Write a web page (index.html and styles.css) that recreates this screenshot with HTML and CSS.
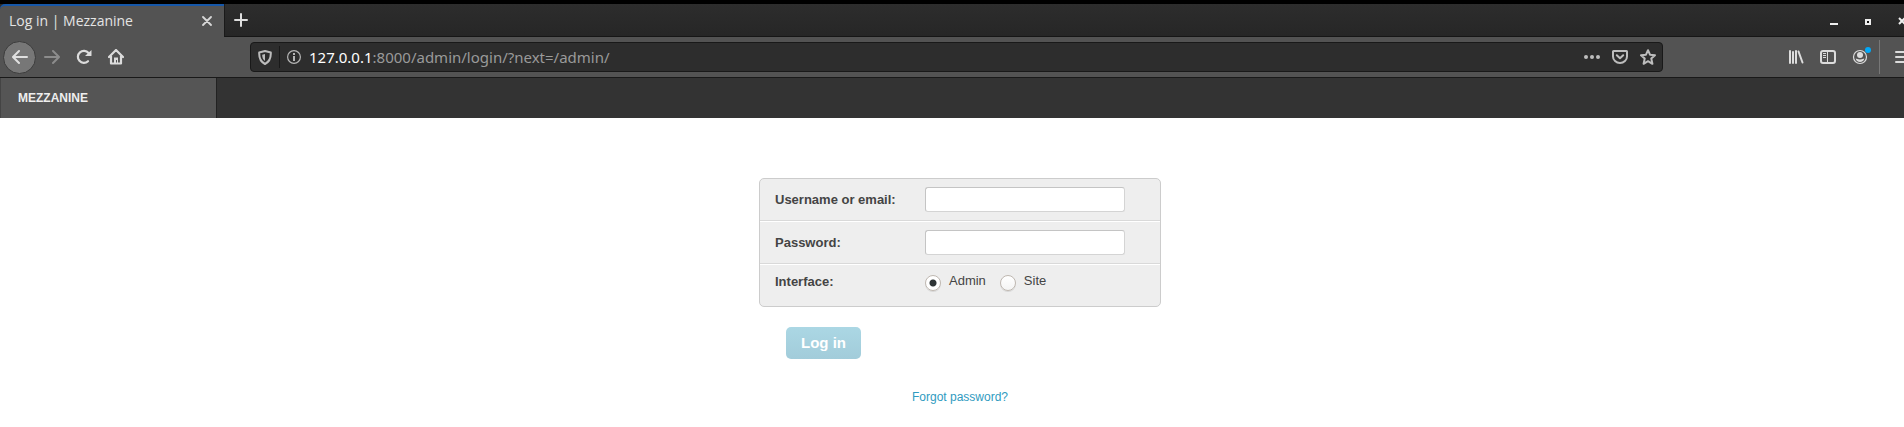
FILE: index.html
```html
<!DOCTYPE html>
<html lang="en">
<head>
<meta charset="utf-8">
<title>Log in | Mezzanine</title>
<link rel="stylesheet" href="styles.css">
</head>
<body>
<div class="window">
  <header class="tabs">
    <div class="tab">
      <span class="tab-title">Log in | Mezzanine</span>
      <button class="plain tab-close" aria-label="Close tab"><svg width="10" height="10" viewBox="0 0 10 10"><path d="M1 1l8 8M9 1l-8 8" fill="none" stroke="#d8d8d8" stroke-width="1.8" stroke-linecap="round"/></svg></button>
    </div>
    <button class="plain new-tab" aria-label="New tab"><svg width="14" height="14" viewBox="0 0 14 14"><path d="M7 1v12M1 7h12" fill="none" stroke="#dedede" stroke-width="2" stroke-linecap="round"/></svg></button>
    <div class="controls">
      <button class="plain control" aria-label="Minimize"><svg width="8" height="8" viewBox="0 0 8 8"><path d="M0 6h8v2H0z" fill="#eee"/></svg></button>
      <button class="plain control" aria-label="Maximize"><svg width="8" height="8" viewBox="0 0 8 8"><path d="M2 3h4v4H2z" fill="#111" stroke="#eee" stroke-width="2"/></svg></button>
      <button class="plain control" aria-label="Close"><svg width="8" height="8" viewBox="0 0 8 8"><path d="M1 1l6 6M7 1L1 7" stroke="#eee" stroke-width="2"/></svg></button>
    </div>
  </header>

  <nav class="toolbar" aria-label="Navigation">
    <button class="plain tool back" aria-label="Back"><svg width="16" height="16" viewBox="0 0 16 16"><path d="M15 8H1.500M7 2L1 8l6 6" fill="none" stroke="#e0e0e0" stroke-width="2" stroke-linecap="round" stroke-linejoin="round"/></svg></button>
    <button class="plain tool" aria-label="Forward"><svg width="16" height="16" viewBox="0 0 16 16"><path d="M1 8h13.500M9 2l6 6-6 6" fill="none" stroke="#8c8c8c" stroke-width="2" stroke-linecap="round" stroke-linejoin="round"/></svg></button>
    <button class="plain tool" aria-label="Reload"><svg width="16" height="16" viewBox="0 0 16 16"><path d="M12 12.200A6 6 0 1 1 12.500 4" fill="none" stroke="#dcdcdc" stroke-width="2.200" stroke-linecap="round"/><path d="M15.500 1v5.500a.5.500 0 0 1-.5.500H9z" fill="#dcdcdc"/></svg></button>
    <button class="plain tool" aria-label="Home"><svg width="16" height="16" viewBox="0 0 16 16"><path d="M1 8l7-7 7 7M3 7v7.500h10V7" fill="none" stroke="#dcdcdc" stroke-width="2.200" stroke-linecap="round" stroke-linejoin="round"/><path d="M6 8.500h4V14H9v-3H8v3H6z" fill="#dcdcdc"/></svg></button>

    <div class="address">
      <span class="shield"><svg width="14" height="15" viewBox="0 0 14 15"><path d="M7 1l5.800 1.500c.2 5-.8 9-5.800 11.500C2 11.500 1 7.500 1.200 2.500z" fill="none" stroke="#bdbdbd" stroke-width="2" stroke-linejoin="round"/><path d="M7 4v7C4.900 9.600 4.200 7.500 4.200 4.700z" fill="#bdbdbd"/></svg></span>
      <span class="info"><svg width="14" height="14" viewBox="0 0 14 14"><circle cx="7" cy="7" r="6.400" fill="none" stroke="#b5b5b5" stroke-width="1.200"/><path d="M6 6h2v5H6zM6 3h2v2H6z" fill="#b5b5b5"/></svg></span>
      <span class="url"><b>127.0.0.1</b>:8000/admin/login/?next=/admin/</span>
      <span class="page-actions">
        <svg width="16" height="16" viewBox="0 0 16 16"><g fill="#bdbdbd"><circle cx="2" cy="8" r="2"/><circle cx="8" cy="8" r="2"/><circle cx="14" cy="8" r="2"/></g></svg>
        <svg width="16" height="16" viewBox="0 0 16 16"><path d="M1.500 2h13a.5.500 0 0 1 .5.500V7.500a7 6.500 0 0 1-14 0V2.500a.5.500 0 0 1 .5-.5z" fill="none" stroke="#bdbdbd" stroke-width="2"/><path d="M4.800 6.200L8 9.200l3.200-3" fill="none" stroke="#bdbdbd" stroke-width="2" stroke-linecap="round" stroke-linejoin="round"/></svg>
        <svg width="16" height="16" viewBox="0 0 16 16"><path d="M8 1.200l2 4.500 5 .5-3.700 3.400 1.100 5.200L8 12.200l-4.400 2.600 1.100-5.200L1 6.200l5-.5z" fill="none" stroke="#bdbdbd" stroke-width="2" stroke-linejoin="round"/></svg>
      </span>
    </div>

    <button class="plain tool" aria-label="Library"><svg width="16" height="16" viewBox="0 0 16 16"><path d="M2 2v12M5 3v11M8 2v12M10.500 2.500l4 11" fill="none" stroke="#dcdcdc" stroke-width="2" stroke-linecap="round"/></svg></button>
    <button class="plain tool" aria-label="Sidebars"><svg width="16" height="16" viewBox="0 0 16 16"><rect x="1" y="2" width="14" height="12" rx="2" fill="none" stroke="#dcdcdc" stroke-width="2"/><path d="M7.500 2v12" stroke="#dcdcdc"/><path d="M3 4.500h3M3 6.500h3M3 8.500h3" stroke="#dcdcdc"/></svg></button>
    <button class="plain tool account" aria-label="Account"><svg width="16" height="16" viewBox="0 0 16 16"><circle cx="8" cy="8" r="6.500" fill="none" stroke="#dcdcdc" stroke-width="1.200"/><circle cx="8" cy="6" r="3" fill="#dcdcdc"/><path d="M3.700 9.500c1.300 0 1.800 1 4.300 1s3-1 4.300-1c-.3 2.200-2 3.500-4.300 3.500s-4-1.300-4.300-3.500z" fill="#dcdcdc"/></svg><span class="dot"></span></button>
    <span class="divider"></span>
    <button class="plain tool" aria-label="Menu"><svg width="16" height="16" viewBox="0 0 16 16"><path d="M1 3h14M1 8h14M1 13h14" stroke="#dcdcdc" stroke-width="2" stroke-linecap="round"/></svg></button>
  </nav>

  <div class="site-bar"><a class="site-name" href="#">MEZZANINE</a></div>

  <main class="page">
    <form class="login">
      <div class="fields">
        <div class="row"><label class="label" for="user">Username or email:</label><input class="text" id="user" type="text"></div>
        <div class="row"><label class="label" for="pass">Password:</label><input class="text" id="pass" type="password"></div>
        <div class="row choices" role="radiogroup" aria-labelledby="interface">
          <span class="label" id="interface">Interface:</span>
          <label class="choice"><input class="radio" type="radio" name="interface" checked><span>Admin</span></label>
          <label class="choice"><input class="radio" type="radio" name="interface"><span>Site</span></label>
        </div>
      </div>
      <button class="submit" type="submit">Log in</button>
      <a class="forgot" href="#">Forgot password?</a>
    </form>
  </main>
</div>
</body>
</html>
```
FILE: styles.css
```css
* { box-sizing: border-box; }

body {
  margin: 0;
  overflow: hidden;
  background: #fff;
  font-family: "Liberation Sans", Arial, sans-serif;
}

/* The window runs a little past the right edge of the screen. */
.window { width: calc(100% + 16px); }

svg { display: block; flex: none; }

.plain {
  display: flex;
  align-items: center;
  justify-content: center;
  padding: 0;
  border: 0;
  background: none;
}

.tabs {
  display: flex;
  height: 37px;
  border-top: 4px solid #000;
  background: linear-gradient(#2d2d2d, #262626);
}

.tab {
  display: flex;
  align-items: center;
  justify-content: space-between;
  width: 224px;
  padding: 0 12px 1px 9px;
  border-top: 2px solid #1657a8;
  border-radius: 5px 0 0 0;
  background: #535353;
  color: #e4e4e4;
  font: 14px/28px "Open Sans", "Noto Sans", sans-serif;
}

.new-tab {
  width: 33px;
  border-left: 1px solid #1a1a1a;
  border-bottom: 1px solid #161616;
}

.controls {
  display: flex;
  flex: 1;
  justify-content: flex-end;
  padding: 0 1px 0 0;
  border-bottom: 1px solid #161616;
}

.control { width: 34px; padding-top: 1px; }

.toolbar {
  display: flex;
  align-items: center;
  height: 41px;
  padding: 0 1px 0 3px;
  border-bottom: 1px solid #191919;
  background: #535353;
}

.tool { flex: none; width: 32px; height: 32px; }

.back {
  width: 33px;
  height: 33px;
  border: 1px solid #3c3c3c;
  border-radius: 50%;
  background: #777;
}

.address {
  display: flex;
  flex: 1;
  align-items: center;
  height: 30px;
  margin: 0 117px 0 118px;
  padding: 0 6px 0 7px;
  border: 1px solid #191919;
  border-radius: 4px;
  background: #2d2d2d;
  color: #9a9a9a;
  font: 15px/28px "Noto Sans", sans-serif;
}

.shield {
  display: flex;
  align-items: center;
  height: 22px;
  padding-right: 7px;
  border-right: 1px solid #191919;
}

.info { margin: 0 8px 0 7px; }

.url { flex: 1; }
.url b { color: #fff; font-weight: 400; }

.page-actions { display: flex; gap: 12px; }

.account { position: relative; }

.dot {
  position: absolute;
  top: 6px;
  right: 5px;
  width: 6px;
  height: 6px;
  border-radius: 50%;
  background: #00a8f8;
}

.divider {
  width: 1px;
  height: 34px;
  margin: 0 7px 0 3px;
  background: #777;
}

.site-bar {
  display: flex;
  height: 40px;
  background: #333;
}

.site-name {
  width: 217px;
  padding-left: 17px;
  border-left: 1px solid #444;
  border-right: 1px solid #222;
  background: #555;
  color: #eee;
  font-size: 12px;
  font-weight: 700;
  line-height: 40px;
  text-decoration: none;
}

.page { padding-top: 60px; }

.login {
  display: flex;
  flex-direction: column;
  width: 402px;
  margin: 0 auto;
}

.fields {
  border: 1px solid #ccc;
  border-radius: 5px;
  background: #eee;
  color: #444;
  font-size: 13px;
  line-height: 25px;
  overflow: hidden;
}

.row {
  display: flex;
  padding: 8px 15px;
  border-bottom: 1px solid #d9d9d9;
}

.row + .row { border-top: 1px solid #fff; }
.row:last-child { border-bottom: 0; }

.label { width: 150px; font-weight: 700; }

.text {
  width: 200px;
  height: 25px;
  padding: 2px 5px;
  border: 1px solid #d4d4d4;
  border-top-color: #c4c4c4;
  border-left-color: #c4c4c4;
  border-radius: 3px;
  background: #fff;
  font: inherit;
}

.choices { line-height: 18px; }

.choice {
  display: flex;
  margin-right: 14px;
  line-height: 16px;
}

.radio {
  appearance: none;
  width: 16px;
  height: 16px;
  margin: 2px 8px 7px 0;
  border: 1px solid #bfb8b1;
  border-radius: 50%;
  background: linear-gradient(#fff, #f4f4f4);
  box-shadow: 0 1px 0 #d8d8d8;
}

.radio:checked {
  background: radial-gradient(circle, #2e3436 2px, #2e3436 3px, #fff 4px);
}

.submit {
  align-self: flex-start;
  width: 75px;
  height: 32px;
  margin: 20px 0 0 27px;
  padding: 0;
  border: 0;
  border-radius: 5px;
  background: linear-gradient(#abd7e4, #a2ccda);
  color: #fff;
  font: bold 15px/32px "Liberation Sans", Arial, sans-serif;
}

.forgot {
  align-self: center;
  margin-top: 30px;
  color: #309bbf;
  font-size: 12px;
  line-height: 16px;
  text-decoration: none;
}
```
